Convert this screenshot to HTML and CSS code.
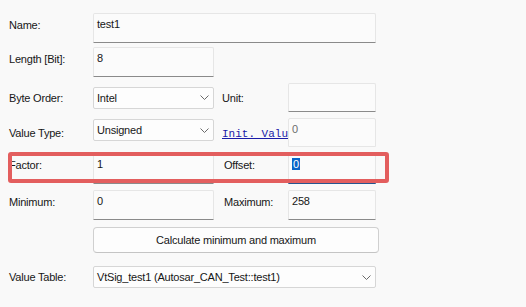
FILE: index.html
```html
<!DOCTYPE html>
<html>
<head>
<meta charset="utf-8">
<link rel="stylesheet" href="styles.css">
</head>
<body>
<div class="dlg">
  <div class="row r-name">
    <span class="lbl top">Name:</span>
    <div class="tb span3">test1</div>
  </div>
  <div class="row r-len">
    <span class="lbl top">Length [Bit]:</span>
    <div class="tb">8</div>
  </div>
  <div class="row r-byte">
    <span class="lbl">Byte Order:</span>
    <div class="sel">Intel<svg class="chev" width="9" height="5" viewBox="0 0 9 5"><polyline points="0.5,0.5 4.5,4.5 8.5,0.5" fill="none" stroke="#6a6a6a" stroke-width="1"/></svg></div>
    <span class="lbl2">Unit:</span>
    <div class="tb"></div>
  </div>
  <div class="row r-vt">
    <span class="lbl">Value Type:</span>
    <div class="sel">Unsigned<svg class="chev" width="9" height="5" viewBox="0 0 9 5"><polyline points="0.5,0.5 4.5,4.5 8.5,0.5" fill="none" stroke="#6a6a6a" stroke-width="1"/></svg></div>
    <span class="lbl2 link"><span>Init. Value:</span></span>
    <div class="tb ro">0</div>
  </div>
  <div class="row r-factor">
    <span class="lbl top">Factor:</span>
    <div class="tb">1</div>
    <span class="lbl2 wide top">Offset:</span>
    <div class="tb focus"><span class="selected">0</span></div>
  </div>
  <div class="row r-min">
    <span class="lbl top">Minimum:</span>
    <div class="tb">0</div>
    <span class="lbl2 wide top">Maximum:</span>
    <div class="tb">258</div>
  </div>
  <div class="row r-btn">
    <span></span>
    <button class="btn span3">Calculate minimum and maximum</button>
  </div>
  <div class="row r-vtab">
    <span class="lbl">Value Table:</span>
    <div class="sel span3">VtSig_test1 (Autosar_CAN_Test::test1)<svg class="chev" width="9" height="5" viewBox="0 0 9 5"><polyline points="0.5,0.5 4.5,4.5 8.5,0.5" fill="none" stroke="#6a6a6a" stroke-width="1"/></svg></div>
  </div>
  <div class="hl"></div>
</div>
</body>
</html>
```

FILE: styles.css
```css
html, body {
  margin: 0;
  padding: 0;
  background: #f9f9f9;
}
body {
  width: 526px;
  height: 307px;
  overflow: hidden;
  font-family: "Liberation Sans", Arial, sans-serif;
  font-size: 11px;
  letter-spacing: -0.2px;
  color: #161616;
}
.dlg {
  position: relative;
  padding: 13px 0 0 9px;
}
.row {
  display: grid;
  grid-template-columns: 84px 121px 74px 88px;
}
.lbl, .lbl2 {
  align-self: center;
  white-space: nowrap;
  line-height: 14px;
}
.lbl.top, .lbl2.top {
  align-self: start;
  padding-top: 5px;
}
.lbl2 { padding-left: 8px; }
.lbl2.wide { padding-left: 10px; }
.span3 { grid-column: 2 / 5; }

.tb {
  box-sizing: border-box;
  background: #fbfbfb;
  border: 1px solid #e6e6e6;
  border-bottom: 1px solid #8a8a8a;
  border-radius: 2px 2px 0 0;
  padding: 3px 3px 0;
  line-height: 14px;
  height: 30px;
}
.tb.ro { color: #6d6d6d; border-bottom-color: #e6e6e6; }
.tb.focus { border-bottom: 2px solid #25558f; }
.selected {
  background: #0a64c8;
  color: #fff;
  padding: 0 1px;
}
.sel {
  box-sizing: border-box;
  height: 22px;
  background: #fdfdfd;
  border: 1px solid #d6d6d6;
  border-radius: 2px;
  padding: 0 3px;
  display: flex;
  align-items: center;
  justify-content: space-between;
  align-self: center;
}
.chev { margin-right: 1px; }

.link {
  font-family: "Liberation Mono", "Courier New", monospace;
  font-size: 11px;
  letter-spacing: 0;
  color: #1a1aa8;
  text-decoration: underline;
  overflow: hidden;
  padding-top: 3px;
}

.r-name { height: 30px; margin-bottom: 4px; }
.r-len { height: 30px; margin-bottom: 6px; }
.r-byte { height: 29px; margin-bottom: 6px; }
.r-byte .tb, .r-vt .tb { height: 29px; }
.r-vt { height: 29px; margin-bottom: 6px; }
.r-vt .sel { align-self: start; margin-top: 1px; }
.r-factor { height: 31px; margin-bottom: 6px; }
.r-factor .tb { height: 31px; }
.r-min { height: 30px; margin-bottom: 7px; }
.r-btn { height: 26px; margin-bottom: 13px; }
.r-vtab { height: 22px; }

.btn {
  box-sizing: border-box;
  height: 26px;
  margin-right: -3px;
  background: #fdfdfd;
  border: 1px solid #d0d0d0;
  border-bottom-color: #c4c4c4;
  border-radius: 4px;
  font-family: inherit;
  font-size: 11px;
  letter-spacing: -0.2px;
  color: #161616;
  padding: 0;
}

.hl {
  position: absolute;
  left: 8px;
  top: 152px;
  width: 381px;
  height: 31px;
  box-sizing: border-box;
  border: 4px solid #e35e5e;
  border-radius: 3px;
  pointer-events: none;
}
```
